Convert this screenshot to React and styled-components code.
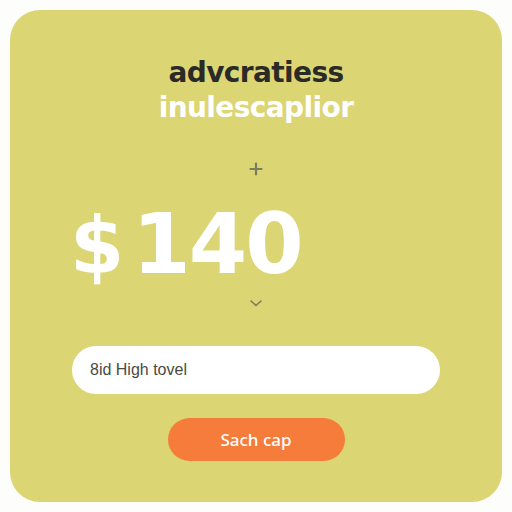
import React from 'react';
import styled, { createGlobalStyle } from 'styled-components';

const Global = createGlobalStyle`
  html, body {
    margin: 0;
    padding: 0;
    background: #fdfdfb;
    font-family: "DejaVu Sans", "Liberation Sans", sans-serif;
  }
`;

const Page = styled.div`
  width: 512px;
  height: 512px;
  padding: 10px;
  box-sizing: border-box;
`;

const Card = styled.div`
  height: 100%;
  border-radius: 30px;
  background: #dbd574;
  display: flex;
  flex-direction: column;
  align-items: center;
  box-sizing: border-box;
  padding-top: 45px;
`;

const Title = styled.h1`
  margin: 0;
  font-size: 28px;
  line-height: 35px;
  font-weight: 700;
  letter-spacing: -0.6px;
  color: ${p => (p.light ? '#ffffff' : '#2a2a26')};
  text-align: center;
`;

const Stepper = styled.div`
  margin-top: 37px;
  width: 100%;
  display: flex;
  flex-direction: column;
  align-items: center;
`;

const Arrow = styled.div`
  width: 14px;
  height: 14px;
  color: #7d7a62;
  display: flex;
  align-items: center;
  justify-content: center;
`;

const Amount = styled.div`
  align-self: stretch;
  padding-left: 60px;
  margin: 18px 0 0;
  font-size: 84px;
  line-height: 100px;
  font-weight: 700;
  color: #ffffff;
  letter-spacing: -2px;
  span {
    font-size: 78px;
    margin-right: 10px;
  }
`;

const Field = styled.div`
  margin-top: 36px;
  width: 368px;
  height: 48px;
  border-radius: 24px;
  background: #ffffff;
  display: flex;
  align-items: center;
  padding-left: 18px;
  box-sizing: border-box;
  font-family: "Liberation Sans", "Noto Sans", sans-serif;
  font-size: 16px;
  color: #4a4a44;
`;

const Action = styled.button`
  margin-top: 24px;
  width: 177px;
  height: 43px;
  border: none;
  border-radius: 22px;
  background: #f57c3a;
  color: #ffffff;
  font-family: "Noto Sans", "Liberation Sans", sans-serif;
  font-size: 17px;
  font-weight: 500;
  cursor: pointer;
`;

const Plus = () => (
  <svg width="14" height="14" viewBox="0 0 14 14">
    <path d="M7 1.5v11M1.5 7h11" stroke="currentColor" strokeWidth="2.2" strokeLinecap="round" />
  </svg>
);

const Chevron = () => (
  <svg width="14" height="10" viewBox="0 0 14 10">
    <path d="M2 3l5 4.5L12 3" stroke="currentColor" strokeWidth="1.6" fill="none" strokeLinecap="round" />
  </svg>
);

export default function App() {
  return (
    <>
      <Global />
      <Page>
        <Card>
          <Title>advcratiess</Title>
          <Title light>inulescaplior</Title>
          <Stepper>
            <Arrow><Plus /></Arrow>
            <Amount><span>$</span>140</Amount>
            <Arrow><Chevron /></Arrow>
          </Stepper>
          <Field>8id High tovel</Field>
          <Action>Sach cap</Action>
        </Card>
      </Page>
    </>
  );
}
